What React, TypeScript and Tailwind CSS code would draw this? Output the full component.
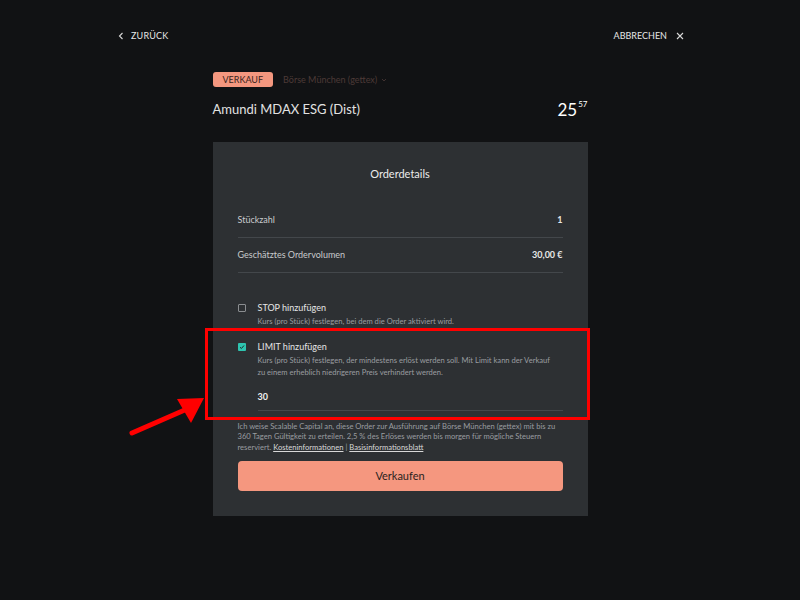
import React from "react";

const Row = ({ label, value }: { label: string; value: string }) => (
  <div className="flex items-center justify-between h-[35px] border-b border-[#43474b] text-[9px]">
    <span className="text-[#c9cbcd]">{label}</span>
    <span className="text-[#e8e8e8] font-bold">{value}</span>
  </div>
);

const App: React.FC = () => {
  return (
    <div
      className="relative w-[800px] h-[600px] bg-[#111214] text-[#e6e6e6] overflow-hidden"
      style={{ fontFamily: "Lato, 'Noto Sans', sans-serif" }}
    >
      {/* header */}
      <div className="flex items-center justify-between w-[570px] mx-auto pt-[29px] h-[42px] text-[9px] tracking-[0.02em]">
        <div className="flex items-center gap-[6px] pl-[2px]">
          <svg width="8" height="8" viewBox="0 0 8 8" fill="none" stroke="#d8d8d8" strokeWidth="1.1">
            <path d="M5.5 1 L2.5 4 L5.5 7" />
          </svg>
          <span>ZURÜCK</span>
        </div>
        <div className="flex items-center gap-[9px] pr-[1px]">
          <span className="tracking-[0]">ABBRECHEN</span>
          <svg width="8" height="8" viewBox="0 0 8 8" fill="none" stroke="#d8d8d8" strokeWidth="1.1">
            <path d="M1 1 L7 7 M7 1 L1 7" />
          </svg>
        </div>
      </div>

      <div className="w-[375px] mx-auto">
        <div className="flex items-center gap-[10px] mt-[30px]">
          <span className="h-[15px] px-[10px] rounded-[3px] bg-[#f4977f] text-[#3a2420] text-[9px] flex items-center">
            VERKAUF
          </span>
          <span className="text-[#4d3a37] text-[9px] flex items-center gap-[4px]">
            Börse München (gettex)
            <svg width="6" height="6" viewBox="0 0 6 6" fill="none" stroke="#4d3a37" strokeWidth="0.8">
              <path d="M1 2 L3 4 L5 2" />
            </svg>
          </span>
        </div>
        <div className="flex items-start justify-between mt-[12px] h-[43px]">
          <span className="text-[13px] text-[#e2e2e2] mt-[1px]">Amundi MDAX ESG (Dist)</span>
          <span className="flex items-start">
            <span className="text-[17px] leading-[22px] text-white">25</span>
            <span className="text-[8px] text-white ml-[1px] leading-[10px]">57</span>
          </span>
        </div>

        {/* card */}
        <div className="bg-[#2d3033] px-[25px] pt-[25px] h-[374px]">
          <div className="text-center text-[11px] text-[#ececec] leading-[14px]">Orderdetails</div>
          <div className="mt-[22px]">
            <Row label="Stückzahl" value="1" />
            <Row label="Geschätztes Ordervolumen" value="30,00 €" />
          </div>

          <div className="flex gap-[12px] mt-[29px]">
            <span className="w-[8px] h-[8px] mt-[2px] border border-[#8a8d90] rounded-[1px] shrink-0" />
            <div>
              <div className="text-[9px] text-[#e6e6e6] leading-[12px]">STOP hinzufügen</div>
              <div className="text-[7.6px] text-[#9a9da0] leading-[12px] mt-[1px]">
                Kurs (pro Stück) festlegen, bei dem die Order aktiviert wird.
              </div>
            </div>
          </div>

          <div className="relative flex gap-[12px] mt-[14px]">
            <span className="w-[8px] h-[8px] mt-[2px] rounded-[1px] bg-[#2ec4b0] shrink-0 flex items-center justify-center">
              <svg width="6" height="6" viewBox="0 0 6 6" fill="none" stroke="#1e2a2a" strokeWidth="1">
                <path d="M1 3.2 L2.4 4.5 L5 1.5" />
              </svg>
            </span>
            <div className="flex-1">
              <div className="text-[9px] text-[#e6e6e6] leading-[12px]">LIMIT hinzufügen</div>
              <div className="text-[7.6px] text-[#9a9da0] leading-[12px] mt-[1px]">
                Kurs (pro Stück) festlegen, der mindestens erlöst werden soll. Mit Limit kann der Verkauf
                <br />
                zu einem erheblich niedrigeren Preis verhindert werden.
              </div>
              <div className="text-[9px] font-bold text-[#f0f0f0] mt-[12px] pb-[6px] border-b border-[#43474b]">30</div>
            </div>
            <div className="absolute left-[-33px] right-[-27px] top-[-13px] bottom-[-9px] border-[3px] border-[#ff0000] pointer-events-none" />
          </div>

          <div className="text-[7.6px] text-[#9a9da0] leading-[10.5px] mt-[10px]">
            Ich weise Scalable Capital an, diese Order zur Ausführung auf Börse München (gettex) mit bis zu
            <br />
            360 Tagen Gültigkeit zu erteilen. 2,5 % des Erlöses werden bis morgen für mögliche Steuern
            <br />
            reserviert. <span className="underline text-[#d8d8d8]">Kosteninformationen</span> |{" "}
            <span className="underline text-[#d8d8d8]">Basisinformationsblatt</span>
          </div>

          <button className="w-full h-[30px] mt-[9px] rounded-[4px] bg-[#f5977f] text-[#2a2321] text-[11px]">
            Verkaufen
          </button>
        </div>
      </div>

      {/* annotation arrow */}
      <svg className="absolute left-[125px] top-[392px]" width="85" height="48" viewBox="0 0 85 48">
        <path d="M7 41 L62 17" stroke="#ff0000" strokeWidth="5" strokeLinecap="round" />
        <path d="M79 6 L52 7 L66 31 Z" fill="#ff0000" />
      </svg>
    </div>
  );
};

export default App;
